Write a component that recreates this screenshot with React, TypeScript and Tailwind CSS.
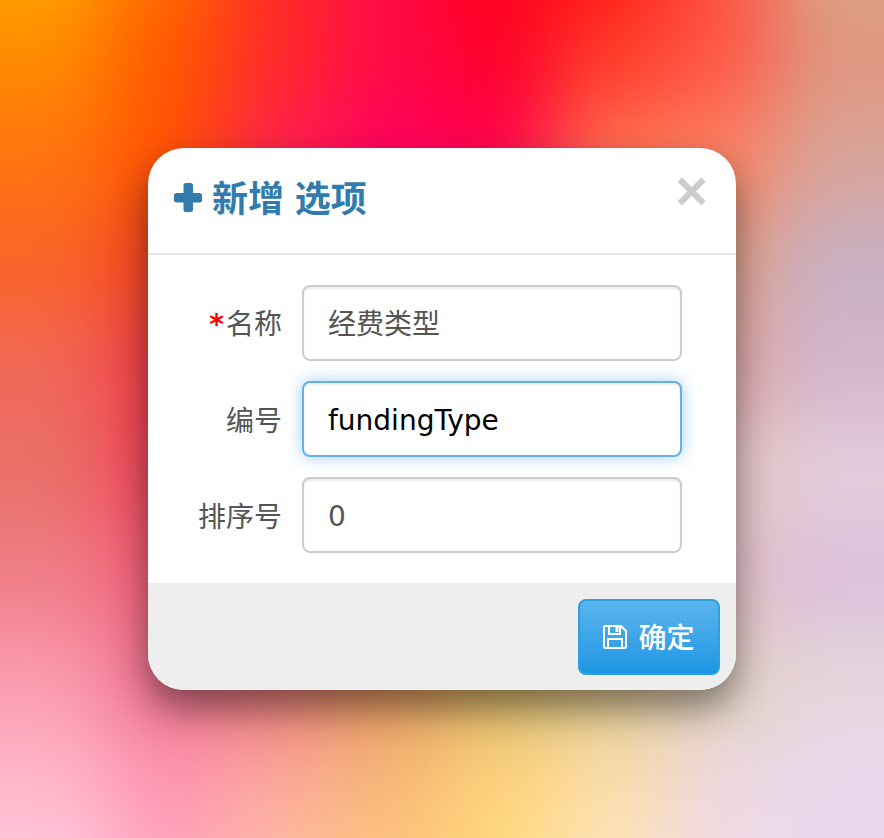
const FONT = "font-['Open_Sans','Noto_Sans_CJK_SC',sans-serif]";

const MESH = [
  ["#ffa800", "#ff7000", "#ff2a28", "#ff0a48", "#ff0018", "#ff1410", "#ff5040", "#d8a888"],
  ["#ff8c00", "#ff5800", "#ff2a28", "#ff0a48", "#ff0028", "#ff3a28", "#ff5545", "#e0967f"],
  ["#ff7410", "#ff5200", "#ff2050", "#ff0060", "#ff0050", "#ff7050", "#fb8060", "#d8a498"],
  ["#fa6428", "#ef4020", "#e83040", "#e83860", "#e06070", "#e08080", "#dea088", "#c8b0c4"],
  ["#f06858", "#ee3848", "#e84060", "#e06070", "#d88080", "#d8a0a0", "#dca4a4", "#d4b6cc"],
  ["#ea7068", "#ee4058", "#e85070", "#e08088", "#d8a0a0", "#d8b0b0", "#e4c4c0", "#e4cedc"],
  ["#f07e88", "#f05a78", "#e87088", "#e08088", "#d8a0a0", "#d8b0b0", "#e2bcc4", "#dcc0dc"],
  ["#fb9cb0", "#ec708e", "#e97a78", "#e2985c", "#d8b868", "#e0c890", "#e0d0c0", "#e6d6dc"],
  ["#ffb8cc", "#ff96b4", "#fcab9c", "#f8b878", "#ffd47c", "#fddeaa", "#efd8e0", "#ead8ee"],
  ["#ffd0e0", "#ffa8c4", "#ffc0a8", "#ffc880", "#ffdc80", "#ffe6c0", "#f0dce4", "#ecd8f0"],
];

function Mesh() {
  const rows = [[MESH[0][0], ...MESH[0], MESH[0][7]], ...MESH.map((r) => [r[0], ...r, r[7]])];
  return (
    <div className="absolute left-[-110px] top-[-210px] grid h-[1155px] w-[1105px] grid-cols-10 grid-rows-11 blur-[40px]">
      {rows.flat().map((c, i) => (
        <div key={i} style={{ backgroundColor: c }} />
      ))}
    </div>
  );
}

function Row({ label, required, value, focused }: { label: string; required?: boolean; value: string; focused?: boolean }) {
  return (
    <div className="flex items-center gap-5">
      <label className="w-[134px] pt-[2px] text-right text-[28px] leading-[40px] text-[#555555]">
        {required && <span className="pr-[2px] font-['DejaVu_Sans',sans-serif] font-bold text-[#ff0000]">*</span>}
        {label}
      </label>
      <div
        className={
          "flex h-[76px] w-[380px] items-center rounded-lg border-2 bg-white px-6 pt-1 font-['DejaVu_Sans','Noto_Sans_CJK_SC',sans-serif] text-[28px] " +
          (focused
            ? "border-[#66afe9] text-black shadow-[inset_0_2px_2px_rgba(0,0,0,0.075),0_0_16px_rgba(102,175,233,0.6)]"
            : "border-[#cccccc] text-[#555555] shadow-[inset_0_2px_2px_rgba(0,0,0,0.075)]")
        }
      >
        {value}
      </div>
    </div>
  );
}

export default function App() {
  return (
    <div className={FONT + " relative flex h-[838px] w-[884px] items-start justify-center overflow-hidden bg-[#e4c8d4]"}>
      <Mesh />
      <div className="relative mt-[148px] flex h-[542px] w-[588px] flex-col overflow-hidden rounded-[36px] bg-white shadow-[0_18px_36px_rgba(0,0,0,0.45)]">
        <div className="flex h-[107px] shrink-0 items-start justify-between border-b-2 border-[#e5e5e5] pl-[26px] pr-[28px]">
          <div className="mt-[28px] flex items-center gap-[10px] text-[36px] font-bold leading-[46px] text-[#317cac] [word-spacing:1.5px]">
            <svg viewBox="0 0 28 29" className="mb-[3px] h-[29px] w-[28px]" fill="currentColor">
              <rect x="9.5" y="0" width="9.5" height="29" rx="2.5" />
              <rect x="0" y="10" width="28" height="9.5" rx="2.5" />
            </svg>
            <span>新增 选项</span>
          </div>
          <span className="mt-[19px] font-['Liberation_Sans',sans-serif] text-[56px] font-bold leading-[48px] text-[#cccccc]">×</span>
        </div>
        <div className="flex flex-1 flex-col gap-5 pt-[30px]">
          <Row label="名称" required value="经费类型" />
          <Row label="编号" value="fundingType" focused />
          <Row label="排序号" value="0" />
        </div>
        <div className="flex h-[107px] shrink-0 items-start justify-end bg-[#eeeeee] pr-4 pt-4">
          <button className="flex h-[76px] w-[142px] items-center justify-center gap-[11px] rounded-lg border-2 border-[#2f9fe0] bg-gradient-to-b from-[#58b5ee] to-[#1b96e4] text-[28px] font-medium text-white">
            <svg viewBox="0 0 24 24" className="h-[24px] w-[24px]" fill="none" stroke="currentColor" strokeWidth="2">
              <path d="M1 2.500A1.500 1.500 0 0 1 2.500 1H18l5 5v15.500a1.500 1.500 0 0 1-1.500 1.500h-19A1.500 1.500 0 0 1 1 21.500Z" />
              <path d="M6 1.500V9h11V1.500M5 23v-9h14v9" />
              <path d="M14 2v5" strokeWidth="3" />
            </svg>
            <span>确定</span>
          </button>
        </div>
      </div>
    </div>
  );
}
